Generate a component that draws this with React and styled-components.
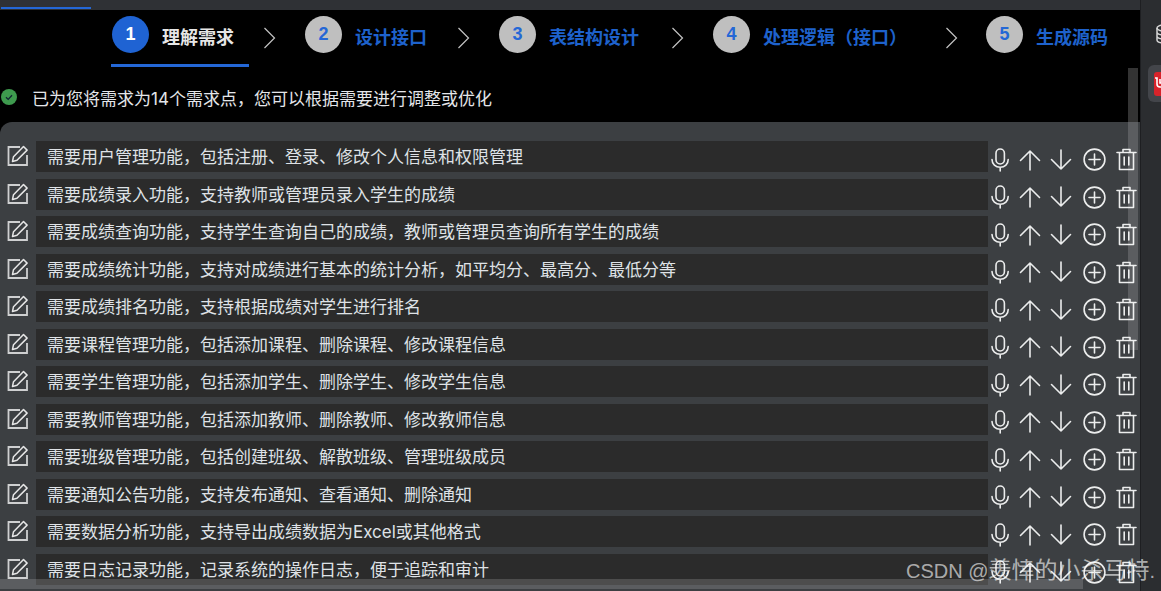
import React from "react";
import styled, { createGlobalStyle } from "styled-components";

const Global = createGlobalStyle`
  html, body { margin: 0; padding: 0; background: #000; }
  body { width: 1161px; height: 591px; overflow: hidden; font-family: "Inter", "Noto Sans CJK SC", sans-serif; }
  * { box-sizing: border-box; }
`;

const Shell = styled.div`
  position: relative;
  display: flex;
  width: 1161px;
  height: 591px;
  overflow: hidden;
  background: #000;
`;
const Main = styled.main`
  position: relative;
  width: 1140px;
  height: 591px;
  display: flex;
  flex-direction: column;
  overflow: hidden;
`;
const TopBar = styled.div`
  height: 10px;
  flex: none;
  background: #2f3135;
  padding-left: 1px;
`;
const TopTab = styled.div`
  width: 90px;
  height: 2px;
  margin-top: 7px;
  background: #2467d6;
`;
const Steps = styled.nav`
  display: flex;
  align-items: flex-start;
  height: 57px;
  flex: none;
  padding-left: 111px;
`;
const Step = styled.div`
  display: flex;
  align-items: center;
  gap: 13px;
  height: 57px;
  padding: 0 15px 5px 1px;
  border-bottom: 3px solid ${(p) => (p.$active ? "#2467d6" : "transparent")};
`;
const Circle = styled.span`
  width: 37px;
  height: 37px;
  border-radius: 50%;
  display: flex;
  align-items: center;
  justify-content: center;
  font: 700 18px "Liberation Sans", sans-serif;
  color: ${(p) => (p.$active ? "#fff" : "#2467d6")};
  background: ${(p) => (p.$active ? "#1f63d3" : "#bfbfbf")};
`;
const StepLabel = styled.span`
  font-size: 18px;
  line-height: 24px;
  font-weight: 700;
  padding-top: 6px;
  white-space: nowrap;
  color: ${(p) => (p.$active ? "#e6e6e6" : "#1e62cc")};
`;
const Chevron = styled.svg`
  flex: none;
  width: 13px;
  height: 22px;
  margin: 17px ${(p) => p.$right}px 0 ${(p) => p.$left}px;
  fill: none;
  stroke: #c4c4c4;
  stroke-width: 1.2;
`;
const Notice = styled.div`
  height: 55px;
  flex: none;
  display: flex;
  align-items: center;
  gap: 15px;
  padding: 5px 0 0 1px;
  font-size: 17px;
  color: #e4e6ea;
`;
const Panel = styled.section`
  flex: 1;
  background: #3c3f42;
  border-top-left-radius: 12px;
  padding-top: 19px;
  display: grid;
  grid-auto-rows: 31px;
  row-gap: 6.5px;
  overflow: hidden;
`;
const Row = styled.div`
  display: grid;
  grid-template-columns: 36px 952px 1fr;
  align-items: stretch;
`;
const EditSlot = styled.div`
  display: flex;
  justify-content: flex-start;
  padding: 4px 0 0 7px;
`;
const TextBox = styled.div`
  background: #2b2b2b;
  padding: 1px 11px 0;
  font-size: 17px;
  line-height: 31px;
  color: #dfe2e6;
  white-space: nowrap;
  overflow: hidden;
`;
const Actions = styled.div`
  display: flex;
  align-items: center;
  padding: 6px 0 0 3px;
  gap: 9px;
  & > :nth-child(2) { margin-left: 1px; }
  & > :nth-child(4) { margin-left: 2px; }
  & > :nth-child(5) { margin-left: 1px; }
`;
const Icon = styled.svg`
  flex: none;
  fill: none;
  stroke: #eceded;
  stroke-width: 1.6;
  stroke-linecap: round;
  stroke-linejoin: round;
`;
const VScrollTop = styled.div`
  position: absolute;
  left: 1128px;
  top: 68px;
  width: 10px;
  height: 54px;
  background: #333;
`;
const VScroll = styled.div`
  position: absolute;
  left: 1128px;
  top: 122px;
  width: 10px;
  height: 228px;
  background: rgba(255, 255, 255, 0.16);
`;
const HScroll = styled.div`
  position: absolute;
  left: 0;
  top: 579px;
  width: 1083px;
  height: 10px;
  background: rgba(255, 255, 255, 0.16);
`;
const Sidebar = styled.aside`
  width: 21px;
  height: 591px;
  flex: none;
  background: #2b2d30;
  border-left: 1px solid #1e1f22;
  display: flex;
  flex-direction: column;
  padding: 24px 0 0 7px;
  gap: 27px;
  overflow: hidden;
`;
const DbIcon = styled.svg`
  flex: none;
  width: 16px;
  height: 20px;
  margin-left: 8px;
  fill: none;
  stroke: #d5d5d5;
  stroke-width: 1.5;
`;
const PluginTile = styled.div`
  width: 30px;
  height: 37px;
  margin-top: -6px;
  flex: none;
  padding: 7px 0 0 6px;
  border-radius: 6px 0 0 6px;
  background: #43454a;
`;
const PluginIcon = styled.svg`
  display: block;
  width: 22px;
  height: 24px;
`;
const Watermark = styled.div`
  position: absolute;
  left: 906px;
  top: 556px;
  font-size: 20px;
  line-height: 28px;
  font-family: "Liberation Sans", "Noto Sans CJK SC", sans-serif;
  color: rgba(255, 255, 255, 0.62);
  white-space: nowrap;
`;
const WatermarkName = styled.span`
  font-size: 23px;
`;

const EditIcon = () => (
  <Icon width="22" height="22" viewBox="0 0 22 22">
    <path d="M13 2H1.500V20H20V10" stroke="#cfd0d1" strokeWidth="1.800" strokeLinecap="butt" strokeLinejoin="miter" />
    <path d="M5.500 16.500l1-4.800L16.500 1.500l3.600 3.600L10 15.300z" stroke="#e6e6e6" strokeWidth="1.500" />
  </Icon>
);
const Mic = () => (
  <Icon width="18" height="24" viewBox="0 0 18 24">
    <rect x="5" y="1" width="8.400" height="15" rx="4.200" />
    <path d="M1 11.500c0 4.600 3.600 7.800 8.200 7.800s8-3.200 8-7.800M9.200 19.300V23" />
  </Icon>
);
const Up = () => (
  <Icon width="22" height="22" viewBox="0 0 22 22">
    <path d="M11 21V2M1.500 11.500L11 2l9.500 9.500" />
  </Icon>
);
const Down = () => (
  <Icon width="22" height="22" viewBox="0 0 22 22">
    <path d="M11 1v19M1.500 10.500L11 20l9.500-9.500" />
  </Icon>
);
const Plus = () => (
  <Icon width="23" height="23" viewBox="0 0 23 23">
    <circle cx="11.500" cy="11.500" r="10.400" />
    <path d="M11.500 6v11M6 11.500h11" />
  </Icon>
);
const Trash = () => (
  <Icon width="21" height="23" viewBox="0 0 21 23">
    <path d="M1 4.500h19M7 4.500V1.500h7v3M3.500 4.500V21.500h14V4.500M8.200 9v8M12.800 9v8" />
  </Icon>
);

const rows = [
  "需要用户管理功能，包括注册、登录、修改个人信息和权限管理",
  "需要成绩录入功能，支持教师或管理员录入学生的成绩",
  "需要成绩查询功能，支持学生查询自己的成绩，教师或管理员查询所有学生的成绩",
  "需要成绩统计功能，支持对成绩进行基本的统计分析，如平均分、最高分、最低分等",
  "需要成绩排名功能，支持根据成绩对学生进行排名",
  "需要课程管理功能，包括添加课程、删除课程、修改课程信息",
  "需要学生管理功能，包括添加学生、删除学生、修改学生信息",
  "需要教师管理功能，包括添加教师、删除教师、修改教师信息",
  "需要班级管理功能，包括创建班级、解散班级、管理班级成员",
  "需要通知公告功能，支持发布通知、查看通知、删除通知",
  "需要数据分析功能，支持导出成绩数据为Excel或其他格式",
  "需要日志记录功能，记录系统的操作日志，便于追踪和审计",
];

const steps = [
  { n: 1, label: "理解需求", left: 14, right: 28, active: true },
  { n: 2, label: "设计接口", left: 15, right: 28 },
  { n: 3, label: "表结构设计", left: 17, right: 28 },
  { n: 4, label: "处理逻辑（接口）", left: 23, right: 27 },
  { n: 5, label: "生成源码" },
];

export default function App() {
  return (
    <Shell>
      <Global />
      <Main>
        <TopBar>
          <TopTab />
        </TopBar>
        <Steps>
          {steps.map((s) => (
            <React.Fragment key={s.n}>
              <Step $active={s.active}>
                <Circle $active={s.active}>{s.n}</Circle>
                <StepLabel $active={s.active}>{s.label}</StepLabel>
              </Step>
              {s.left && (
                <Chevron $left={s.left} $right={s.right} viewBox="0 0 13 22">
                  <path d="M1.500 1L11.500 11L1.500 21" />
                </Chevron>
              )}
            </React.Fragment>
          ))}
        </Steps>
        <Notice>
          <svg width="16" height="16" viewBox="0 0 16 16">
            <circle cx="8" cy="8" r="8" fill="#3e9a4e" />
            <path d="M5 8.200l2.200 2.200L11 6.200" fill="none" stroke="#123" strokeWidth="1.300" />
          </svg>
          已为您将需求为14个需求点，您可以根据需要进行调整或优化
        </Notice>
        <Panel>
          {rows.map((text) => (
            <Row key={text}>
              <EditSlot>
                <EditIcon />
              </EditSlot>
              <TextBox>{text}</TextBox>
              <Actions>
                <Mic />
                <Up />
                <Down />
                <Plus />
                <Trash />
              </Actions>
            </Row>
          ))}
        </Panel>
        <VScrollTop />
        <VScroll />
        <HScroll />
      </Main>
      <Sidebar>
        <DbIcon viewBox="0 0 16 20">
          <ellipse cx="8" cy="4" rx="7" ry="3" />
          <path d="M1 4v12c0 1.700 3 3 7 3s7-1.300 7-3V4M1 8c0 1.700 3 3 7 3s7-1.300 7-3M1 12c0 1.700 3 3 7 3s7-1.300 7-3" />
        </DbIcon>
        <PluginTile>
          <PluginIcon viewBox="0 0 22 24">
            <rect width="22" height="24" rx="3" fill="#d8232a" />
            <path d="M1 6h2v6c0 2 1 3 3 3h8M6 7v4h3" fill="none" stroke="#fff" strokeWidth="1.600" />
          </PluginIcon>
        </PluginTile>
      </Sidebar>
      <Watermark>
        CSDN @<WatermarkName>羡悻的小杀马特</WatermarkName>.
      </Watermark>
    </Shell>
  );
}
